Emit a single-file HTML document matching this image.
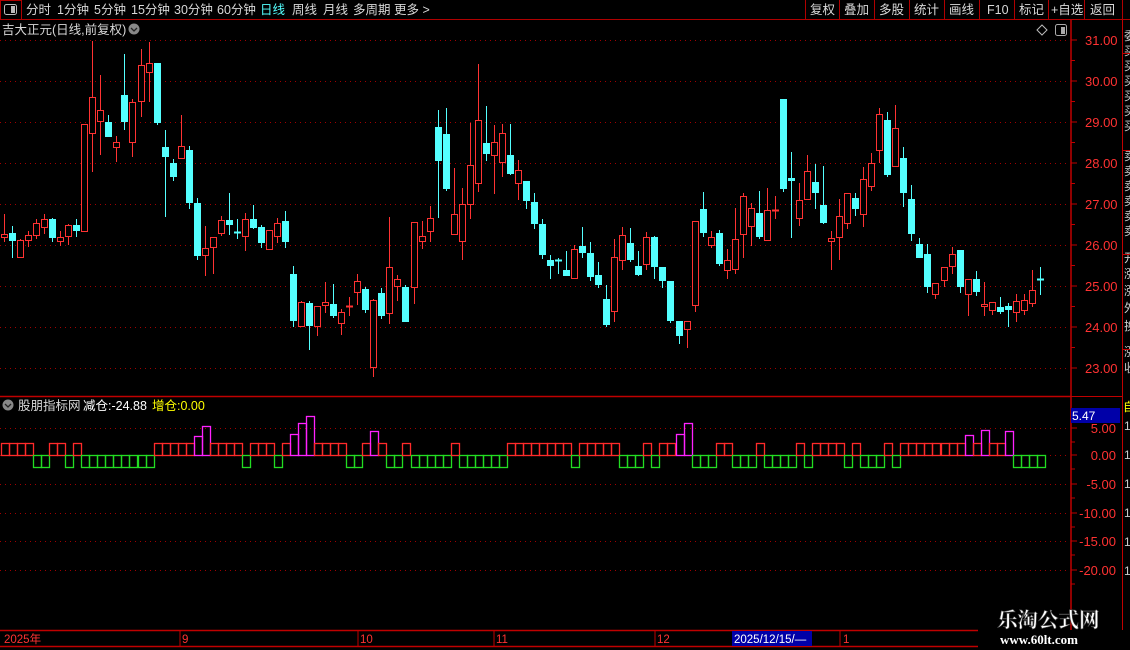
<!DOCTYPE html>
<html><head><meta charset="utf-8">
<style>
html,body{margin:0;padding:0;background:#000;width:1130px;height:650px;overflow:hidden;font-family:"Liberation Sans","Noto Sans CJK SC",sans-serif;}
svg text{font-family:"Liberation Sans","Noto Sans CJK SC",sans-serif;}
</style></head><body>
<svg id="s" width="1130" height="650" xmlns="http://www.w3.org/2000/svg" style="position:absolute;left:0;top:0">
<rect width="1130" height="650" fill="#000"/>
<line x1="0" y1="19.5" x2="1130" y2="19.5" stroke="#b00000"/>
<rect x="0.5" y="0.5" width="21" height="19" fill="none" stroke="#b00000"/>
<rect x="4.5" y="4.5" width="12" height="10" rx="2" fill="none" stroke="#bbb"/>
<rect x="11" y="6" width="4" height="7" fill="#bbb"/>
<g font-size="12.5" fill="#d8d8d8">
<text x="26" y="14">分时</text><text x="57" y="14">1分钟</text><text x="94" y="14">5分钟</text><text x="131" y="14">15分钟</text><text x="174" y="14">30分钟</text><text x="217" y="14">60分钟</text>
<text x="260" y="14" fill="#54ffff">日线</text><text x="292" y="14">周线</text><text x="323" y="14">月线</text><text x="353" y="14">多周期</text><text x="394" y="14">更多 &gt;</text>
<text x="810" y="14">复权</text><text x="844" y="14">叠加</text><text x="879" y="14">多股</text><text x="914" y="14">统计</text><text x="949" y="14">画线</text><text x="987" y="14">F10</text><text x="1019" y="14">标记</text><text x="1051" y="14">+自选</text><text x="1090" y="14">返回</text>
</g>
<g stroke="#b00000"><line x1="805.5" y1="0" x2="805.5" y2="19"/><line x1="839.5" y1="0" x2="839.5" y2="19"/><line x1="874.5" y1="0" x2="874.5" y2="19"/><line x1="909.5" y1="0" x2="909.5" y2="19"/><line x1="944.5" y1="0" x2="944.5" y2="19"/><line x1="979.5" y1="0" x2="979.5" y2="19"/><line x1="1014.5" y1="0" x2="1014.5" y2="19"/><line x1="1048.5" y1="0" x2="1048.5" y2="19"/><line x1="1084.5" y1="0" x2="1084.5" y2="19"/><line x1="1122.5" y1="0" x2="1122.5" y2="19"/></g>
<text x="2" y="34" font-size="12.5" fill="#d8d8d8">吉大正元(日线,前复权)</text>
<circle cx="134" cy="29" r="5.5" fill="#888"/><path d="M131 28l3 3 3-3" stroke="#222" stroke-width="1.3" fill="none"/>
<path d="M1042 25l5 5-5 5-5-5z" fill="none" stroke="#bbb"/>
<rect x="1055.5" y="24.5" width="11" height="11" rx="2" fill="none" stroke="#aaa"/><rect x="1061" y="27" width="4" height="7" fill="#aaa"/>
<line x1="1071" y1="20" x2="1071" y2="630" stroke="#c00000" stroke-width="1.5"/>
<line x1="1122.5" y1="20" x2="1122.5" y2="630" stroke="#c00000"/>
<line x1="0" y1="396.5" x2="1071" y2="396.5" stroke="#c00000" stroke-width="1.5"/>
<line x1="1071" y1="396.5" x2="1122" y2="396.5" stroke="#c00000"/>
<g id="grid"></g>
<g id="candles"></g>
<g id="ind"></g>
<circle cx="8" cy="405" r="5.5" fill="#888"/><path d="M5 404l3 3 3-3" stroke="#222" stroke-width="1.3" fill="none"/>
<text x="18" y="410" font-size="12.5" fill="#d8d8d8">股朋指标网</text>
<text x="83" y="410" font-size="12.5" fill="#fff">减仓:-24.88</text>
<text x="152" y="410" font-size="12.5" fill="#ffff00">增仓:0.00</text>
<rect x="1071" y="408" width="49" height="15" fill="#0000a8"/>
<text x="1072" y="420" font-size="12" fill="#fff">5.47</text>
<rect x="1123" y="398" width="7" height="15" fill="#000"/><text x="1123" y="411" font-size="12" fill="#ffff00">自</text>
<g id="rp" font-size="12" fill="#ccc"></g>
<line x1="0" y1="630.5" x2="978" y2="630.5" stroke="#c00000" stroke-width="1.5"/>
<line x1="0" y1="646.5" x2="978" y2="646.5" stroke="#c00000" stroke-width="1.5"/>
<g stroke="#c00000"><line x1="180" y1="631" x2="180" y2="646"/><line x1="358" y1="631" x2="358" y2="646"/><line x1="494" y1="631" x2="494" y2="646"/><line x1="655" y1="631" x2="655" y2="646"/><line x1="840" y1="631" x2="840" y2="646"/></g>
<g font-size="11.5" fill="#ff3232"><text x="4" y="643">2025年</text><text x="182" y="643">9</text><text x="360" y="643">10</text><text x="496" y="643">11</text><text x="657" y="643">12</text><text x="843" y="643">1</text></g>
<rect x="732" y="631" width="80" height="15" fill="#0000a8"/><text x="734" y="643" font-size="11.5" fill="#fff">2025/12/15/—</text>
<text x="997" y="627" font-size="20.5" font-weight="bold" fill="#fff" stroke="#444" stroke-width="0.6" style="font-family:'Noto Serif CJK SC','Noto Sans CJK SC',serif">乐淘公式网</text>
<text x="1000" y="644" font-size="13" font-weight="bold" fill="#fff" style="font-family:'Liberation Serif',serif">www.60lt.com</text>
</svg>
<script>
var NS="http://www.w3.org/2000/svg";
function el(p,t,a){var e=document.createElementNS(NS,t);for(var k in a)e.setAttribute(k,a[k]);p.appendChild(e);return e;}
var g=document.getElementById('grid');
for(var k=0;k<=8;k++){var y=40+41*k;el(g,'line',{x1:0,y1:y+.5,x2:1068,y2:y+.5,stroke:'#a00000','stroke-dasharray':'1 4'});
 el(g,'line',{x1:1071,y1:y,x2:1077,y2:y,stroke:'#c00000'});
 if(k<8)el(g,'line',{x1:1071,y1:y+20.5,x2:1075,y2:y+20.5,stroke:'#c00000'});
 var t=el(g,'text',{x:1085,y:y+5,'font-size':13,fill:'#ff3232'});t.textContent=(31-k).toFixed(2);}
var iv=[[428,'5.00'],[455,'0.00'],[484,'-5.00'],[513,'-10.00'],[541,'-15.00'],[570,'-20.00']];
iv.forEach(function(a){el(g,'line',{x1:0,y1:a[0]+.5,x2:1068,y2:a[0]+.5,stroke:'#a00000','stroke-dasharray':'1 4'});
 el(g,'line',{x1:1071,y1:a[0],x2:1077,y2:a[0],stroke:'#c00000'});
 el(g,'line',{x1:1071,y1:a[0]+14,x2:1075,y2:a[0]+14,stroke:'#c00000'});
 var t=el(g,'text',{x:1116,y:a[0]+5,'font-size':13,fill:'#ff3232','text-anchor':'end'});t.textContent=a[1];});
var C=`r 234 238 214 242
c 233 241 226 258
r 240 258 239 258
r 235 241 231 247
r 223 236 219 239
r 219 228 214 234
c 219 238 218 242
r 237 242 231 246
r 225 237 224 245
c 225 231 219 237
r 124 232 124 232
r 97 134 41 172
r 110 122 75 155
c 122 137 115 137
r 142 148 136 162
c 95 122 54 130
r 102 143 99 157
r 65 102 49 117
r 63 73 42 102
c 63 123 63 125
c 147 157 130 217
c 163 177 159 181
r 146 159 115 159
c 150 203 146 209
c 203 256 198 260
r 248 256 226 276
r 237 248 237 274
r 220 234 216 236
c 220 225 193 235
c 232 234 219 239
r 219 237 213 251
c 219 228 205 229
c 227 243 225 248
r 230 250 230 250
r 223 237 218 243
c 221 242 211 248
c 274 321 266 327
r 302 327 301 327
c 303 326 301 350
r 306 327 306 336
r 302 306 282 313
c 304 316 284 318
r 312 324 309 335
r 306 308 297 316
r 281 293 274 305
c 289 310 287 313
r 300 368 299 377
c 293 316 288 319
r 267 314 217 324
r 279 287 275 301
c 287 322 285 322
r 222 288 222 304
r 236 242 221 249
r 218 232 206 242
c 127 161 110 218
c 134 189 108 191
r 214 235 168 235
r 204 242 188 260
r 165 205 123 219
r 120 184 64 192
c 143 154 106 161
r 142 156 125 194
r 133 163 124 177
c 155 174 124 175
r 170 184 160 200
c 181 201 181 209
c 202 224 193 229
c 224 255 219 259
c 260 266 255 279
c 260 262 258 274
c 270 276 251 276
r 249 279 245 279
c 246 253 227 258
c 253 277 242 281
c 275 285 262 288
c 299 325 285 327
r 257 312 239 322
r 235 261 227 270
c 243 260 228 262
c 266 275 251 276
r 237 265 232 270
c 237 267 236 279
c 267 281 267 288
c 281 321 281 323
c 321 336 321 344
r 321 330 321 348
r 221 306 221 312
c 209 233 192 237
r 237 246 231 248
c 233 264 230 266
r 260 271 249 279
r 239 270 208 274
r 196 235 193 258
r 208 227 203 246
c 213 237 191 239
r 210 241 188 241
r 210 212 196 219
c 99 189 99 192
c 178 181 152 238
r 200 219 183 226
r 171 200 155 200
c 182 193 164 209
c 205 223 166 224
r 238 242 231 270
r 216 238 199 260
r 193 224 193 229
c 198 209 193 216
r 179 215 167 227
r 163 187 153 191
r 114 151 108 163
c 120 175 112 177
r 128 167 105 167
c 158 193 147 207
c 199 234 185 241
c 244 258 238 258
c 254 287 244 293
r 283 295 283 299
r 267 281 267 287
r 254 267 247 274
c 250 287 250 293
r 279 295 279 316
c 279 292 271 296
r 304 307 282 316
r 302 311 302 315
c 307 312 297 314
c 306 310 303 327
r 301 313 294 322
r 300 311 294 315
r 290 304 270 307
c 279 280 267 295`.split('\n');
var cg=document.getElementById('candles');
function L(i){return Math.round(1+8.03*i);}
C.forEach(function(line,i){var a=line.trim().split(/\s+/),t=a[0],bt=+a[1],bb=+a[2],wt=+a[3],wb=+a[4];
 var x=L(i),cx=x+3.5,col=t=='r'?'#ff3232':'#54ffff';
 el(cg,'line',{x1:cx,y1:wt,x2:cx,y2:wb,stroke:col});
 if(bb-bt<=2){el(cg,'line',{x1:x,y1:bt+.5,x2:x+7,y2:bt+.5,stroke:col,'stroke-width':2});}
 else if(t=='r'){el(cg,'rect',{x:x+.5,y:bt+.5,width:6,height:bb-bt-1,fill:'#000',stroke:col});}
 else el(cg,'rect',{x:x,y:bt,width:7,height:bb-bt,fill:col});
});
var I={};function set(a,b,v){for(var i=a;i<=b;i++)I[i]=v;}
set(1,4,'R');set(5,6,'G');set(7,8,'R');set(9,9,'G');set(10,10,'R');set(11,19,'G');set(20,24,'R');
I[25]='M436';I[26]='M426';set(27,30,'R');I[31]='G';set(32,34,'R');I[35]='G';I[36]='R';I[37]='M434';I[38]='M423';I[39]='M416';
set(40,43,'R');set(44,45,'G');I[46]='R';I[47]='M431';I[48]='R';set(49,50,'G');I[51]='R';set(52,56,'G');I[57]='R';set(58,63,'G');
set(64,71,'R');I[72]='G';set(73,77,'R');set(78,80,'G');I[81]='R';I[82]='G';set(83,84,'R');I[85]='M434';I[86]='M423';set(87,89,'G');
set(90,91,'R');set(92,94,'G');I[95]='R';set(96,99,'G');I[100]='R';I[101]='G';set(102,105,'R');I[106]='G';I[107]='R';set(108,110,'G');
I[111]='R';I[112]='G';set(113,120,'R');I[121]='M435';I[122]='R';I[123]='M430';set(124,125,'R');I[126]='M431';set(127,130,'G');
var ig=document.getElementById('ind');
for(var i=1;i<=130;i++){var v=I[i]||'R',x=L(i-1)+.5;
 if(v=='G')el(ig,'rect',{x:x,y:455.5,width:8,height:12,fill:'none',stroke:'#22dd22','stroke-width':1.3});
 else if(v=='R')el(ig,'rect',{x:x,y:443.5,width:8,height:12,fill:'none',stroke:'#ff2a2a','stroke-width':1.3});
 else{var tp=+v.slice(1);el(ig,'rect',{x:x,y:tp+.5,width:8,height:455-tp,fill:'none',stroke:'#ff22ff','stroke-width':1.3});}}
var rp=document.getElementById('rp');var ch='委买买买买买买卖卖卖卖卖卖开涨涨外换涨收';
var ys=[40,55,70,85,100,115,130,160,175,190,205,220,235,262,278,295,312,330,356,372,388];
for(var j=0;j<ch.length;j++){var t=el(rp,'text',{x:1124,y:ys[j]});t.textContent=ch[j];}
[53,150,254,349].forEach(function(y){el(rp,'line',{x1:1122,y1:y+.5,x2:1130,y2:y+.5,stroke:'#c00000'});});
for(var y=430;y<600;y+=29){var t=el(rp,'text',{x:1124,y:y});t.textContent='1';}
</script>
</body></html>
